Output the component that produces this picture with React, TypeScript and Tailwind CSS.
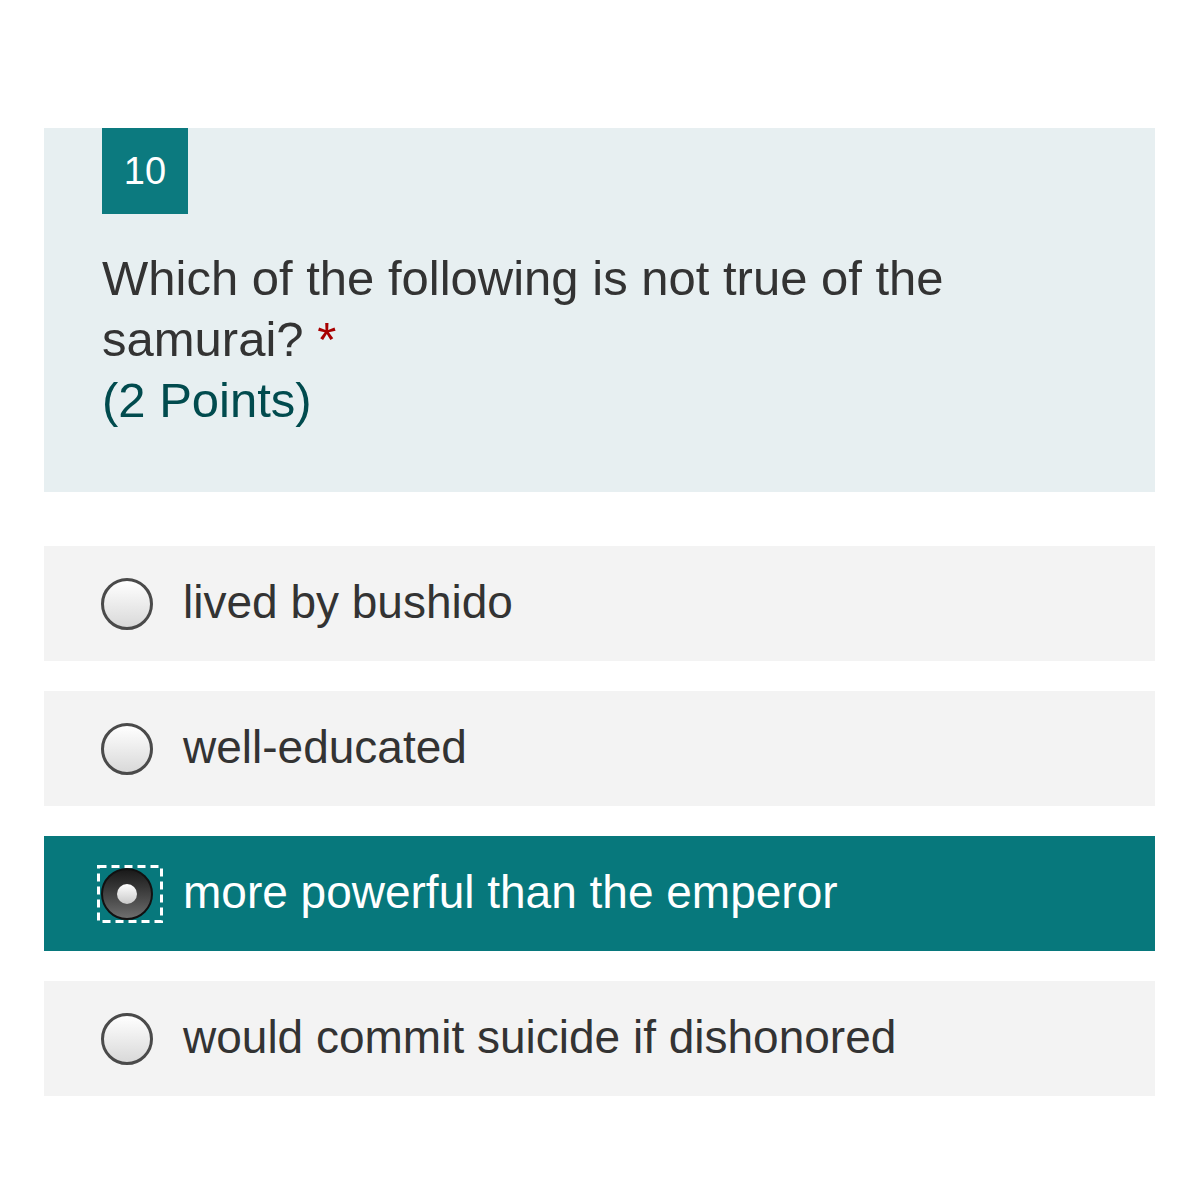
import React from 'react';

const options = [
  'lived by bushido',
  'well-educated',
  'more powerful than the emperor',
  'would commit suicide if dishonored',
];

const selected = 2;

const Radio: React.FC<{ checked: boolean }> = ({ checked }) => {
  if (checked) {
    return (
      <div className="relative w-[52px] h-[52px] shrink-0">
        {/* focus ring */}
        <svg
          className="absolute -left-[4px] -top-[3px]"
          width="66"
          height="58"
          viewBox="0 0 66 58"
        >
          <rect
            x="1.5"
            y="1.5"
            width="63"
            height="55"
            fill="none"
            stroke="#ffffff"
            strokeWidth="3"
            strokeDasharray="8 5"
          />
        </svg>
        <div className="relative w-[52px] h-[52px] rounded-full border-2 border-[#111] bg-gradient-to-b from-[#1a1a1a] to-[#6e6e6e] flex items-center justify-center">
          <div className="w-[20px] h-[20px] rounded-full bg-gradient-to-b from-white to-[#c9c9c9]"></div>
        </div>
      </div>
    );
  }
  return (
    <div className="w-[52px] h-[52px] shrink-0 rounded-full border-[3px] border-[#4a4a4a] bg-gradient-to-b from-white to-[#d9d9d9]"></div>
  );
};

export default function App() {
  return (
    <div className="min-h-[1200px] bg-white pl-[44px] pr-[45px] pt-[128px] font-['Liberation_Sans',Arial,sans-serif]">
      {/* Question header */}
      <div className="bg-[#e7eff1] pl-[58px] pr-[58px] pb-[61px]">
        <div className="w-[86px] h-[86px] bg-[#0c7a7f] text-white text-[38px] flex items-center justify-center">
          10
        </div>
        <div className="mt-[34px] text-[49px] leading-[61px] text-[#333333]">
          <p>
            Which of the following is not true of the samurai?{' '}
            <span className="text-[#a80000]">*</span>
          </p>
          <p className="text-[#014b4e]">(2 Points)</p>
        </div>
      </div>

      {/* Options */}
      <div className="mt-[54px] flex flex-col gap-[30px]">
        {options.map((opt, i) => {
          const checked = i === selected;
          return (
            <div
              key={opt}
              className={`h-[115px] flex items-center gap-[30px] pl-[57px] ${
                checked ? 'bg-[#07787c] text-white' : 'bg-[#f3f3f3] text-[#333333]'
              }`}
            >
              <Radio checked={checked} />
              <span className="text-[46px] leading-none pb-[4px]">{opt}</span>
            </div>
          );
        })}
      </div>
    </div>
  );
}
